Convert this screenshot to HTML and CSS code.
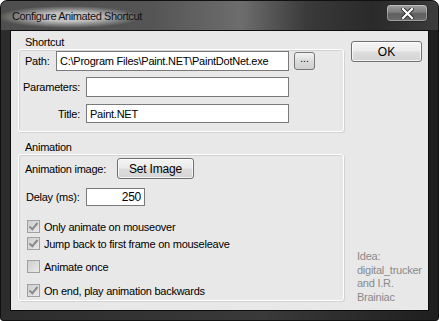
FILE: index.html
```html
<!DOCTYPE html>
<html lang="en">
<head>
  <meta charset="UTF-8" />
  <title>Configure Animated Shortcut</title>
  <link rel="stylesheet" href="styles.css">
</head>
<body>
  <div class="window">
    <div class="titlebar">
      <span class="title">Configure Animated Shortcut</span>
      <button class="close-btn">
        <svg width="13" height="11" viewBox="0 0 13 11">
          <path d="M2 1 L11 10 M11 1 L2 10" stroke="#2a2a2a" stroke-width="4" stroke-linecap="square"/>
          <path d="M2 1 L11 10 M11 1 L2 10" stroke="#fff" stroke-width="2.2" stroke-linecap="square"/>
        </svg>
      </button>
    </div>

    <div class="client">
      <div class="main-col">
        <div class="group-label">Shortcut</div>
        <div class="group shortcut">
          <div class="row path-row">
            <label class="path-label">Path:</label>
            <input type="text" class="field path-field" value="C:\Program Files\Paint.NET\PaintDotNet.exe">
            <button class="browse-btn">...</button>
          </div>
          <div class="row params-row">
            <label class="wide-label">Parameters:</label>
            <input type="text" class="field text-field">
          </div>
          <div class="row title-row">
            <label class="wide-label">Title:</label>
            <input type="text" class="field text-field" value="Paint.NET">
          </div>
        </div>

        <div class="group-label anim-label">Animation</div>
        <div class="group animation">
          <div class="row image-row">
            <label class="image-label">Animation image:</label>
            <button class="btn set-image">Set Image</button>
          </div>
          <div class="row delay-row">
            <label class="delay-label">Delay (ms):</label>
            <input type="text" class="field delay-field" value="250">
          </div>
          <div class="check-row first"><span class="check on"></span>Only animate on mouseover</div>
          <div class="check-row"><span class="check on"></span>Jump back to first frame on mouseleave</div>
          <div class="check-row gap"><span class="check"></span>Animate once</div>
          <div class="check-row gap2"><span class="check on"></span>On end, play animation backwards</div>
        </div>
      </div>

      <div class="side-col">
        <button class="btn ok-btn">OK</button>
        <div class="credits">Idea:<br>digital_trucker<br>and I.R.<br>Brainiac</div>
      </div>
    </div>
  </div>
</body>
</html>
```

FILE: styles.css
```css
body {
  margin: 0;
  background: #fff;
  font-family: "Liberation Sans", Arial, sans-serif;
  font-size: 11px;
  letter-spacing: -0.25px;
  color: #000;
}
.window {
  width: 439px;
  height: 321px;
  box-sizing: border-box;
  border-radius: 7px 7px 3px 3px;
  background: linear-gradient(to right, #2c2c2c 0%, #3a3a3a 60%, #1e1e1e 100%);
  border: 1px solid #111;
  overflow: hidden;
  display: flex;
  flex-direction: column;
}
.titlebar {
  height: 29px;
  display: flex;
  align-items: flex-start;
  justify-content: space-between;
  padding: 0 10px 0 11px;
  background:
    radial-gradient(ellipse 72px 11px at 68px 16px, rgba(200,200,200,0.95) 40%, rgba(200,200,200,0) 100%),
    linear-gradient(to right, #4e4e4e 0%, #555 35%, #6d6d6d 55%, #3a3a3a 70%, #2a2a2a 85%, #3c3c3c 100%);
}
.title {
  margin-top: 9px;
  color: #111;
  font-size: 11px;
  letter-spacing: -0.4px;
}
.close-btn {
  margin-top: 3px;
  width: 42px;
  height: 18px;
  padding: 0;
  border: 1px solid #2a2a2a;
  border-radius: 4px;
  background: linear-gradient(to bottom, #a0a0a0 0%, #7c7c7c 45%, #5e5e5e 55%, #6c6c6c 100%);
  box-shadow: inset 0 0 0 1px rgba(255,255,255,0.35);
  display: flex;
  align-items: center;
  justify-content: center;
}
.client {
  flex: 1;
  margin: 0 9px 9px 9px;
  border: 1px solid #0d0d0d;
  background: #e8e8e8;
  display: flex;
  padding: 5px 6px 0 7px;
}
.main-col {
  width: 326px;
}
.group-label {
  height: 13px;
  line-height: 13px;
  padding-left: 7px;
}
.anim-label {
  margin-top: 9px;
}
.group {
  box-sizing: border-box;
  border: 1px solid #fff;
  border-radius: 3px;
  box-shadow: inset 1px 1px 0 #d2d2d2, 1px 1px 0 #d2d2d2;
}
.shortcut {
  height: 83px;
}
.animation {
  height: 147px;
}
.row {
  display: flex;
  align-items: center;
}
.field {
  box-sizing: border-box;
  height: 20px;
  border: 1px solid #7a7a7a;
  background: #fff;
  font-family: inherit;
  font-size: 11px;
  letter-spacing: -0.25px;
  padding: 0 3px;
  margin: 0;
}
.path-row {
  margin-top: 1px;
}
.path-label {
  width: 31px;
  padding-left: 6px;
}
.path-field {
  width: 233px;
}
.browse-btn {
  margin-left: 5px;
  width: 21px;
  height: 18px;
  padding: 0 0 4px;
  border: 1px solid #777;
  border-radius: 3px;
  background: linear-gradient(to bottom, #f4f4f4, #dcdcdc 50%, #cfcfcf);
  font-family: inherit;
  font-size: 10px;
  line-height: 10px;
}
.wide-label {
  width: 61px;
  text-align: right;
  margin-right: 6px;
}
.params-row .wide-label {
  text-align: left;
  padding-left: 4px;
  width: 57px;
}
.text-field {
  width: 203px;
}
.params-row {
  margin-top: 6px;
}
.title-row {
  margin-top: 7px;
}
.title-row .field {
  height: 19px;
}
.image-row {
  margin-top: 3px;
}
.image-label {
  width: 92px;
  padding-left: 6px;
}
.btn {
  box-sizing: border-box;
  border: 1px solid #707070;
  border-radius: 3px;
  background: linear-gradient(to bottom, #f4f4f4 0%, #ebebeb 48%, #dddddd 52%, #d4d4d4 100%);
  box-shadow: inset 0 0 0 1px rgba(255,255,255,0.7);
  font-family: inherit;
  font-size: 11px;
  color: #000;
  padding: 0;
}
.set-image {
  width: 77px;
  height: 21px;
  font-size: 12px;
  letter-spacing: -0.2px;
}
.delay-row {
  margin-top: 9px;
}
.delay-label {
  width: 60px;
  padding-left: 7px;
}
.delay-field {
  width: 59px;
  height: 18px;
  text-align: right;
  font-size: 12px;
}
.check-row {
  height: 17px;
  display: flex;
  align-items: center;
  padding-left: 8px;
}
.check-row.first {
  margin-top: 12px;
}
.check-row.gap {
  margin-top: 6px;
}
.check-row.gap2 {
  margin-top: 7px;
}
.check {
  box-sizing: border-box;
  width: 13px;
  height: 13px;
  margin-right: 4px;
  border: 1px solid #a0a0a0;
  background: linear-gradient(135deg, #cfcfcf, #e9e9e9);
  position: relative;
}
.check.on::after {
  content: "";
  position: absolute;
  left: 3px;
  top: 0px;
  width: 3px;
  height: 7px;
  border: solid #8a8a8a;
  border-width: 0 2px 2px 0;
  transform: rotate(40deg);
}
.side-col {
  flex: 1;
  margin-left: 7px;
  display: flex;
  flex-direction: column;
  justify-content: space-between;
  padding-top: 5px;
  padding-bottom: 6px;
}
.ok-btn {
  width: 71px;
  height: 21px;
  font-size: 12px;
}
.credits {
  padding-left: 6px;
  color: #8a8a8a;
  line-height: 13.5px;
  font-size: 11px;
}
```
